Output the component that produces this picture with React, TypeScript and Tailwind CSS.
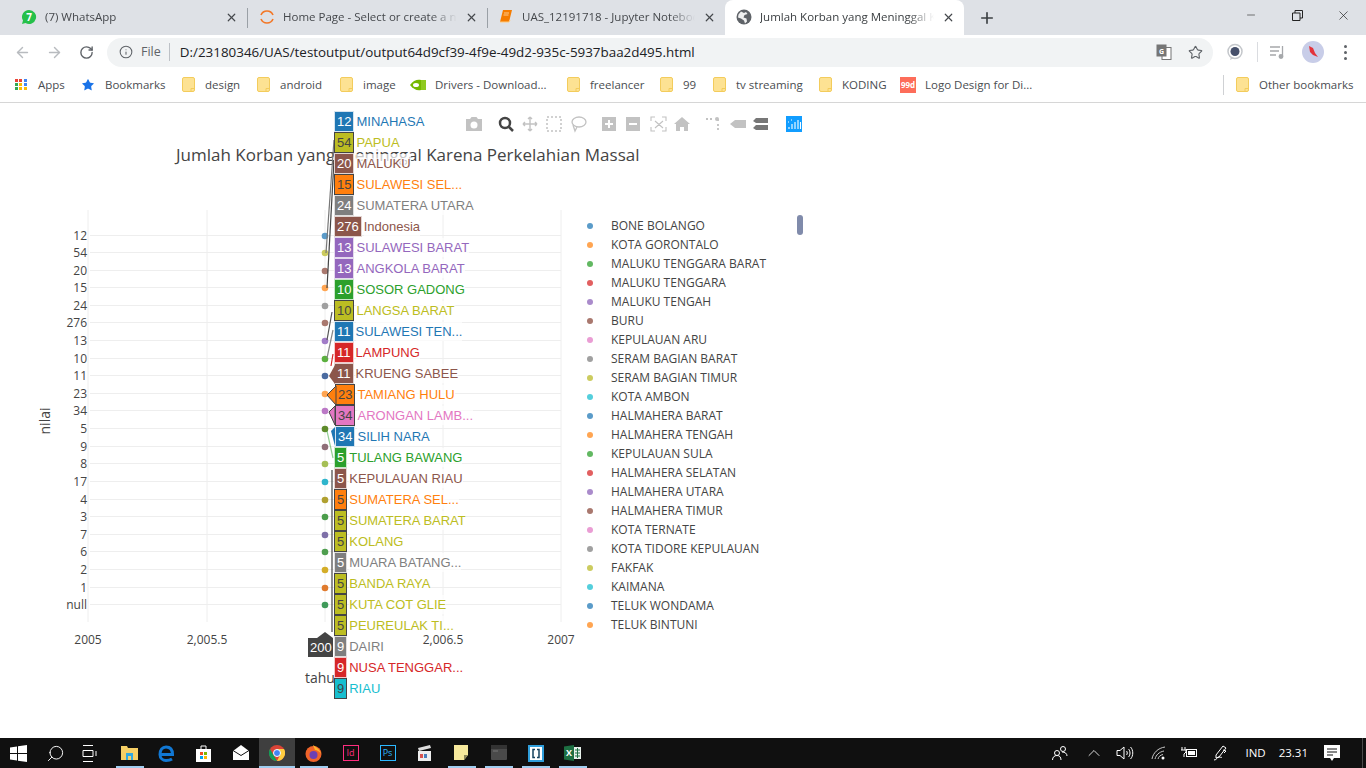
import { ArrowLeft, ArrowRight, ChevronUp, Info, Minus, Plus, RotateCw, Search, Star, X } from "lucide-react";

const ui = "font-['Open_Sans',sans-serif]";

const palette = {
  blue: { box: "bg-[#1f77b4] text-white border-[#d5e4ef]", name: "text-[#1f77b4]" },
  olive: { box: "bg-[#bcbd22] text-[#444] border-[#444]", name: "text-[#bcbd22]" },
  brown: { box: "bg-[#8c564b] text-white border-[#e2d5d2]", name: "text-[#8c564b]" },
  orange: { box: "bg-[#ff7f0e] text-[#444] border-[#444]", name: "text-[#ff7f0e]" },
  gray: { box: "bg-[#7f7f7f] text-white border-[#dfdfdf]", name: "text-[#7f7f7f]" },
  purple: { box: "bg-[#9467bd] text-white border-[#e4d9ee]", name: "text-[#9467bd]" },
  green: { box: "bg-[#2ca02c] text-white border-[#cae7ca]", name: "text-[#2ca02c]" },
  red: { box: "bg-[#d62728] text-white border-[#f5c9c9]", name: "text-[#d62728]" },
  pink: { box: "bg-[#e377c2] text-[#444] border-[#444]", name: "text-[#e377c2]" },
  cyan: { box: "bg-[#17becf] text-[#444] border-[#444]", name: "text-[#17becf]" },
};

const hoverRows: [string, string, keyof typeof palette, string?][] = [
  ["12", "MINAHASA", "blue"],
  ["54", "PAPUA", "olive"],
  ["20", "MALUKU", "brown"],
  ["15", "SULAWESI SEL...", "orange"],
  ["24", "SUMATERA UTARA", "gray"],
  ["276", "Indonesia", "brown"],
  ["13", "SULAWESI BARAT", "purple"],
  ["13", "ANGKOLA BARAT", "purple"],
  ["10", "SOSOR GADONG", "green"],
  ["10", "LANGSA BARAT", "olive"],
  ["11", "SULAWESI TEN...", "blue"],
  ["11", "LAMPUNG", "red"],
  ["11", "KRUENG SABEE", "brown"],
  ["23", "TAMIANG HULU", "orange", "ml-[1px]"],
  ["34", "ARONGAN LAMB...", "pink", "ml-[1px]"],
  ["34", "SILIH NARA", "blue", "ml-[1px]"],
  ["5", "TULANG BAWANG", "green"],
  ["5", "KEPULAUAN RIAU", "brown"],
  ["5", "SUMATERA SEL...", "orange"],
  ["5", "SUMATERA BARAT", "olive"],
  ["5", "KOLANG", "olive"],
  ["5", "MUARA BATANG...", "gray"],
  ["5", "BANDA RAYA", "olive"],
  ["5", "KUTA COT GLIE", "olive"],
  ["5", "PEUREULAK TI...", "olive"],
  ["9", "DAIRI", "gray"],
  ["9", "NUSA TENGGAR...", "red"],
  ["9", "RIAU", "cyan"],
];

const legendColors = ["#5a9bc9", "#ffa552", "#62b862", "#e25f60", "#aa8bcb", "#a9786e", "#ea9dd4", "#a0a0a0", "#cccc5f", "#54cfdc"];
const legend = [
  "BONE BOLANGO", "KOTA GORONTALO", "MALUKU TENGGARA BARAT", "MALUKU TENGGARA", "MALUKU TENGAH", "BURU",
  "KEPULAUAN ARU", "SERAM BAGIAN BARAT", "SERAM BAGIAN TIMUR", "KOTA AMBON", "HALMAHERA BARAT", "HALMAHERA TENGAH",
  "KEPULAUAN SULA", "HALMAHERA SELATAN", "HALMAHERA UTARA", "HALMAHERA TIMUR", "KOTA TERNATE", "KOTA TIDORE KEPULAUAN",
  "FAKFAK", "KAIMANA", "TELUK WONDAMA", "TELUK BINTUNI",
];

const yTicks: [string, number, string][] = [
  ["12", 236, "#5a9bc9"], ["54", 253, "#cccb5f"], ["20", 271, "#a9786e"], ["15", 288, "#ffa552"], ["24", 306, "#a0a0a0"],
  ["276", 323, "#a9786e"], ["13", 341, "#a17cc8"], ["10", 359, "#5bb03f"], ["11", 376, "#4a6ba0"], ["23", 394, "#ffa552"],
  ["34", 411, "#bb79c6"], ["5", 429, "#5d8a2a"], ["9", 447, "#8f6e78"], ["8", 464, "#a5bf55"], ["17", 482, "#2fb5cc"],
  ["4", 500, "#b0a030"], ["3", 517, "#4b9d4b"], ["7", 535, "#7e70a8"], ["6", 552, "#4f9e4f"], ["2", 570, "#d4ad28"],
  ["1", 588, "#e07b2e"], ["null", 605, "#3f9a5a"],
];

const Folder = () => (
  <svg width="13" height="15" viewBox="0 0 13 15" className="shrink-0">
    <rect x="0.5" y="0.5" width="12" height="14" rx="1.5" fill="#fde293" stroke="#f3cc5c" />
    <path d="M9 14.5v-3h3.5" fill="none" stroke="#f3cc5c" />
  </svg>
);

function Tab({ size, icon, title, active }: { size: string; icon: React.ReactNode; title: string; active?: boolean }) {
  return (
    <div className={`${size} h-[35px] pb-[1px] flex items-center gap-[8px] shrink-0 ${active ? "bg-white rounded-t-[8px] text-[#3c4043]" : "text-[#45484c]"}`}>
      <span className="w-4 h-4 flex items-center justify-center shrink-0">{icon}</span>
      <span className="flex-1 text-[11.5px] mask-r-from-85% mask-r-to-100% whitespace-nowrap overflow-hidden">{title}</span>
      <X size={13} strokeWidth={2.2} className="text-[#45484c] shrink-0" />
    </div>
  );
}

function Mark({ width, icon, label }: { width: string; icon: React.ReactNode; label: string }) {
  return (
    <div className={`${width} flex items-center gap-[9px] shrink-0 text-[11.5px] text-[#4a4d51]`}>
      <span className="w-[16px] flex justify-center shrink-0">{icon}</span>
      <span className="whitespace-nowrap">{label}</span>
    </div>
  );
}

function TopBars() {
  return (
    <header className={`${ui} shrink-0`}>
      <div className="h-[35px] bg-[#dee1e6] flex items-end pl-[10px]">
        <Tab
          size="w-[237px] pl-[11px] pr-[9px]"
          title="(7) WhatsApp"
          icon={
            <svg width="16" height="16" viewBox="0 0 16 16">
              <path d="M8 1a7 7 0 0 0-6 10.6L1 15l3.5-1A7 7 0 1 0 8 1z" fill="#25c04a" />
              <text x="8" y="11.5" textAnchor="middle" fontSize="10" fontWeight="700" fill="#fff">7</text>
            </svg>
          }
        />
        <div className="w-px h-[20px] bg-[#9aa0a6] mb-[7px]" />
        <Tab
          size="w-[239px] pl-[11px] pr-[9px]"
          title="Home Page - Select or create a n"
          icon={
            <svg width="16" height="16" viewBox="0 0 16 16" fill="none" stroke="#f37726" strokeWidth="1.6">
              <path d="M2 6a6.5 6.5 0 0 1 12 0" />
              <path d="M2 10a6.5 6.5 0 0 0 12 0" />
            </svg>
          }
        />
        <div className="w-px h-[20px] bg-[#9aa0a6] mb-[7px]" />
        <Tab
          size="w-[237px] pl-[10px] pr-[9px]"
          title="UAS_12191718 - Jupyter Noteboo"
          icon={
            <svg width="16" height="16" viewBox="0 0 16 16">
              <path d="M5 1h9l-3 12H2z" fill="#f57c00" />
              <path d="M2 13h9l1-2" fill="none" stroke="#ffcc80" strokeWidth="1" />
              <path d="M6 4h5M5.5 6h5" stroke="#ffe0b2" strokeWidth="0.8" />
            </svg>
          }
        />
        <Tab
          active
          size="w-[239px] pl-[11px] pr-[9px]"
          title="Jumlah Korban yang Meninggal K"
          icon={
            <svg width="16" height="16" viewBox="0 0 16 16">
              <circle cx="8" cy="8" r="7.5" fill="#5f6368" />
              <path d="M5 2.5l3 1.5 2-1 1.5 2-3 1-1 2.5 3 1 .5 3-2 2-1-3-3-2-3-1 .5-3z" fill="#fff" opacity="0.9" />
            </svg>
          }
        />
        <Plus size={18} strokeWidth={2.2} className="text-[#3c4043] ml-[14px] mb-[8px]" />
        <div className="flex-1" />
        <div className="h-full flex items-start text-[#222]">
          <div className="w-[46px] h-[30px] flex items-center justify-center"><Minus size={12} strokeWidth={1.2} /></div>
          <div className="w-[46px] h-[30px] flex items-center justify-center">
            <svg width="11" height="11" viewBox="0 0 11 11" fill="none" stroke="#222">
              <path d="M.5 3h7.5v7.5H.5zM3 3V.5h7.5V8H8" />
            </svg>
          </div>
          <div className="w-[46px] h-[30px] flex items-center justify-center"><X size={15} strokeWidth={1.1} /></div>
        </div>
      </div>

      <div className="h-[34px] bg-white flex items-center pl-[14px] pr-[12px]">
        <ArrowLeft size={17} strokeWidth={2} className="text-[#b8bbbf]" />
        <ArrowRight size={17} strokeWidth={2} className="text-[#b8bbbf] ml-[15px]" />
        <RotateCw size={15} strokeWidth={2.2} className="text-[#5f6368] ml-[16px]" />
        <div className="ml-[13px] w-[1106px] h-[29px] rounded-full bg-[#f1f3f4] flex items-center pl-[12px] pr-[10px]">
          <Info size={14} strokeWidth={1.8} className="text-[#5f6368]" />
          <span className="ml-[8px] text-[12.5px] text-[#5f6368]">File</span>
          <span className="ml-[8px] w-px h-[18px] bg-[#bdc1c6]" />
          <span className="ml-[10px] text-[13.4px] text-[#202124] whitespace-nowrap">D:/23180346/UAS/testoutput/output64d9cf39-4f9e-49d2-935c-5937baa2d495.html</span>
          <div className="flex-1" />
          <svg width="16" height="16" viewBox="0 0 16 16">
            <rect x="6" y="3.5" width="9" height="12" fill="#fff" stroke="#757575" />
            <rect x="0.5" y="0.5" width="10" height="12" fill="#757575" />
            <text x="5.5" y="9.5" textAnchor="middle" fontSize="7" fontWeight="700" fill="#fff">G</text>
          </svg>
          <Star size={15} strokeWidth={1.8} className="text-[#5f6368] ml-[16px]" />
        </div>
        <svg width="18" height="18" viewBox="0 0 18 18" className="ml-[13px]">
          <circle cx="9" cy="8.5" r="7" fill="#fff" stroke="#c4c7cb" strokeWidth="1.5" />
          <circle cx="9" cy="8.5" r="4.5" fill="#46506b" />
          <path d="M5 14l-1 3 4-2z" fill="#c4c7cb" />
        </svg>
        <span className="ml-[13px] w-px h-[20px] bg-[#dadce0]" />
        <svg width="16" height="16" viewBox="0 0 16 16" className="ml-[12px]" fill="none" stroke="#a6a8ab" strokeWidth="1.3">
          <path d="M0 3h10M0 7h9M0 11h6M12.5 2v10" />
          <circle cx="11" cy="12.5" r="1.8" fill="#a6a8ab" />
        </svg>
        <div className="ml-[16px] w-[22px] h-[22px] rounded-full bg-[#c8cde8] flex items-center justify-center">
          <svg width="14" height="14" viewBox="0 0 14 14"><path d="M3 1l4 2 2 5 3 4-5-2-3-3z" fill="#e3333b" /></svg>
        </div>
        <div className="ml-[20px] flex flex-col gap-[3px]">
          <span className="w-[3px] h-[3px] rounded-full bg-[#5f6368]" />
          <span className="w-[3px] h-[3px] rounded-full bg-[#5f6368]" />
          <span className="w-[3px] h-[3px] rounded-full bg-[#5f6368]" />
        </div>
      </div>

      <div className="h-[34px] bg-white border-b border-[#d6d6d6] flex items-center pl-[13px] pb-[2px]">
        <Mark
          width="w-[67px]"
          label="Apps"
          icon={
            <span className="grid grid-cols-3 gap-[1px] w-[13px]">
              <i className="w-[3px] h-[3px] bg-[#ea4335]" /><i className="w-[3px] h-[3px] bg-[#ea4335]" /><i className="w-[3px] h-[3px] bg-[#4285f4]" />
              <i className="w-[3px] h-[3px] bg-[#34a853]" /><i className="w-[3px] h-[3px] bg-[#fbbc05]" /><i className="w-[3px] h-[3px] bg-[#4285f4]" />
              <i className="w-[3px] h-[3px] bg-[#34a853]" /><i className="w-[3px] h-[3px] bg-[#fbbc05]" /><i className="w-[3px] h-[3px] bg-[#fbbc05]" />
            </span>
          }
        />
        <Mark width="w-[100px]" label="Bookmarks" icon={<Star size={14} fill="#1a73e8" strokeWidth={0} />} />
        <Mark width="w-[75px]" label="design" icon={<Folder />} />
        <Mark width="w-[83px]" label="android" icon={<Folder />} />
        <Mark width="w-[72px]" label="image" icon={<Folder />} />
        <Mark
          width="w-[155px]"
          label="Drivers - Download..."
          icon={
            <svg width="16" height="12" viewBox="0 0 16 12">
              <path d="M0 6C3 1 8 0 11 1v10C7 12 3 10 0 6z" fill="#76b900" />
              <ellipse cx="6" cy="6" rx="3" ry="2" fill="#fff" />
              <path d="M11 1h5v10h-5z" fill="#8fca1f" />
            </svg>
          }
        />
        <Mark width="w-[93px]" label="freelancer" icon={<Folder />} />
        <Mark width="w-[53px]" label="99" icon={<Folder />} />
        <Mark width="w-[106px]" label="tv streaming" icon={<Folder />} />
        <Mark width="w-[83px]" label="KODING" icon={<Folder />} />
        <Mark
          width="w-[323px]"
          label="Logo Design for Di..."
          icon={<span className="w-[16px] h-[16px] bg-[#fd6d5a] text-white text-[8px] font-bold leading-[16px] text-center">99d</span>}
        />
        <span className="w-px h-[20px] bg-[#cfd1d4]" />
        <Mark width="w-[130px] ml-[10px]" label="Other bookmarks" icon={<Folder />} />
      </div>
    </header>
  );
}

function Chart() {
  return (
    <svg viewBox="0 103 1366 635" className="absolute inset-0 w-full h-full font-['Open_Sans',sans-serif]">
      {[88, 207, 325, 443, 561].map((x) => (
        <line key={x} x1={x} x2={x} y1="210" y2="622" stroke="#eee" />
      ))}
      {yTicks.map(([, y]) => (
        <line key={y} x1="90" x2="561" y1={y - 0.5} y2={y - 0.5} stroke="#eee" />
      ))}
      <text x="176" y="161" fontSize="17" fill="#444">Jumlah Korban yang Meninggal Karena Perkelahian Massal</text>
      {yTicks.map(([label, y]) => (
        <text key={label} x="87" y={y + 4} fontSize="12" fill="#444" textAnchor="end">{label}</text>
      ))}
      {yTicks.map(([label, y, color]) => (
        <circle key={label} cx="325" cy={y} r="3.3" fill={color} />
      ))}
      <text x="88" y="644" fontSize="12" fill="#444" textAnchor="middle">2005</text>
      <text x="207" y="644" fontSize="12" fill="#444" textAnchor="middle">2,005.5</text>
      <text x="443" y="644" fontSize="12" fill="#444" textAnchor="middle">2,006.5</text>
      <text x="561" y="644" fontSize="12" fill="#444" textAnchor="middle">2007</text>
      <text x="305" y="683" fontSize="14" fill="#444">tahun</text>
      <text x="0" y="0" fontSize="14" fill="#444" textAnchor="middle" transform="translate(50 421) rotate(-90)">nilai</text>

      <g fill="none" strokeWidth="1.2">
        <path d="M327 288L334 160" stroke="#444" />
        <path d="M326 253L334 140" stroke="#777" />
        <path d="M327 340L332 312" stroke="#555" />
        <path d="M327 358L333 330" stroke="#888" />
        <path d="M331 366L333 354" stroke="#d62728" />
        <path d="M327 431L333 458" stroke="#2ca02c" opacity="0.5" />
        <path d="M332 470L332 632" stroke="#444" />
      </g>
      <path d="M317 638L325 632L333 638V657H308V638z" fill="#444" />
      <text x="310" y="652" fontSize="13" fill="#fff" className="font-['Liberation_Sans',sans-serif]">200</text>
    </svg>
  );
}

function HoverLabels() {
  return (
    <div className="absolute left-[334px] top-[8px] flex flex-col font-['Liberation_Sans',sans-serif] text-[13px]">
      {hoverRows.map(([value, name, color, offset]) => (
        <div key={name} className={`h-[21px] flex items-center gap-[2px] ${offset ?? ""}`}>
          <span className={`h-[21px] px-[2px] border flex items-center ${palette[color].box}`}>{value}</span>
          <span className={`whitespace-nowrap bg-white/70 ${palette[color].name} [text-shadow:1px_1px_1px_#fff,-1px_-1px_1px_#fff,1px_-1px_1px_#fff,-1px_1px_1px_#fff]`}>{name}</span>
        </div>
      ))}
    </div>
  );
}

function HoverArrows() {
  return (
    <svg viewBox="0 103 1366 635" className="absolute inset-0 w-full h-full pointer-events-none">
      <path d="M335 365L329 376L335 384z" fill="#8c564b" />
      <path d="M336 386L327 395L336 405z" fill="#ff7f0e" stroke="#444" />
      <path d="M335 406L329 412L335 425z" fill="#e377c2" stroke="#444" />
      <path d="M335 427L331 431L335 446z" fill="#1f77b4" />
    </svg>
  );
}

function ModeBar() {
  const off = "#c2c2c2";
  return (
    <div className="absolute left-[465px] top-[12px] flex items-center">
      <svg width="340" height="18" viewBox="0 0 340 18">
        <path d="M1 4h4l1.500-2h5l1.500 2h4v12H1z" fill={off} />
        <circle cx="9" cy="10" r="3.500" fill="#fff" />
        <circle cx="40" cy="8" r="5" fill="none" stroke="#444" strokeWidth="2.500" />
        <path d="M44 12l4 4" stroke="#444" strokeWidth="2.500" />
        <path d="M65 2v14M58 9h14M65 2l-2 2M65 2l2 2M65 16l-2-2M65 16l2-2M58 9l2-2M58 9l2 2M72 9l-2-2M72 9l-2 2" stroke={off} strokeWidth="1.400" fill="none" />
        <rect x="82" y="2" width="14" height="14" fill="none" stroke={off} strokeWidth="1.500" strokeDasharray="2 2" />
        <ellipse cx="114" cy="7" rx="7" ry="5" fill="none" stroke={off} strokeWidth="1.300" />
        <path d="M108 10l2 6 2-4" fill="none" stroke={off} strokeWidth="1.300" />
        <rect x="137" y="2" width="14" height="14" fill={off} />
        <path d="M144 5v8M140 9h8" stroke="#fff" strokeWidth="2" />
        <rect x="161" y="2" width="14" height="14" fill={off} />
        <path d="M164 9h8" stroke="#fff" strokeWidth="2" />
        <path d="M186 6V2h4M197 2h4v4M201 12v4h-4M190 16h-4v-4M190 6l8 7M198 6l-8 7" fill="none" stroke={off} strokeWidth="1.100" />
        <path d="M217 2l8 7h-2v7h-4v-4h-4v4h-4V9h-2z" fill={off} />
        <path d="M241 4h2M245 4h2M253 4v2M253 9v2M253 13v2" stroke={off} strokeWidth="1.800" />
        <circle cx="252" cy="4" r="2" fill={off} />
        <path d="M265 9l5-4h11v8h-11z" fill={off} />
        <path d="M288 6l3-3h12v5h-12zM288 13l3-3h12v5h-12z" fill="#777" />
        <rect x="321" y="1" width="16" height="16" fill="#119dff" />
        <path d="M324 12v2M327 9v5M330 7v7M333 5v9M335.500 7v7" stroke="#fff" strokeWidth="1.100" />
        <path d="M323 7h1M326 5h1" stroke="#fff" />
      </svg>
    </div>
  );
}

function Legend() {
  return (
    <div className="absolute left-[587px] top-[113px] flex flex-col font-['Open_Sans',sans-serif] text-[12px] text-[#444]">
      {legend.map((name, i) => (
        <div key={name} className="h-[19px] flex items-center gap-[18px] whitespace-nowrap">
          <span className="w-[6px] h-[6px] rounded-full" style={{ backgroundColor: legendColors[i % 10] }} />
          {name}
        </div>
      ))}
    </div>
  );
}

function Taskbar() {
  const underline = "w-[28px] h-[2px] bg-[#9fcdf0]";
  const cell = "w-[37px] h-[30px] flex flex-col items-center justify-between shrink-0 pt-[7px]";
  return (
    <footer className={`${ui} h-[30px] bg-[#101010] flex items-center shrink-0`}>
      <div className="w-[37px] flex justify-center">
        <svg width="17" height="17" viewBox="0 0 17 17" fill="#fff">
          <path d="M0 2.500l7-1v6.500H0zM8 1.300L17 0v8H8zM0 9h7v6.500l-7-1zM8 9h9v8l-9-1.300z" />
        </svg>
      </div>
      <div className="w-[36px] flex justify-center"><Search size={19} strokeWidth={1.2} className="text-white -scale-x-100" /></div>
      <div className="w-[33px] flex justify-center">
        <svg width="16" height="17" viewBox="0 0 16 17" fill="none" stroke="#fff">
          <path d="M1 .5h10M1 16.500h10M1 5.500h10v6H1zM14 6v5" />
        </svg>
      </div>
      <div className="w-[5px]" />
      <div className={cell}>
        <svg width="17" height="16" viewBox="0 0 17 16">
          <path d="M0 1h6l1 2h10v12H0z" fill="#f6cf65" />
          <path d="M5 15V8h7v7h-2v-4H7v4z" fill="#31a8e0" />
        </svg>
        <span className={underline} />
      </div>
      <div className={cell}>
        <svg width="17" height="17" viewBox="0 0 17 17" fill="none">
          <path d="M2 9.500h12.500C14.500 4 11.500 2 8 2 4.500 2 2 5 2 9.500c0 4 3 6 6 6 2.500 0 4.500-.5 6-1.500" stroke="#1178d4" strokeWidth="3" />
        </svg>
        <span className="h-[2px]" />
      </div>
      <div className={cell}>
        <svg width="15" height="17" viewBox="0 0 15 17">
          <path d="M0 4h15v13H0z" fill="#fff" />
          <path d="M5 4V1h5v3" fill="none" stroke="#fff" />
          <rect x="4" y="7" width="3" height="3" fill="#f25022" />
          <rect x="8" y="7" width="3" height="3" fill="#7fba00" />
          <rect x="4" y="11" width="3" height="3" fill="#00a4ef" />
          <rect x="8" y="11" width="3" height="3" fill="#ffb900" />
        </svg>
        <span className="h-[2px]" />
      </div>
      <div className={cell}>
        <svg width="16" height="15" viewBox="0 0 16 15">
          <path d="M0 6l8-6 8 6v9H0z" fill="#fff" />
          <path d="M0 5.500l8 5 8-5" fill="none" stroke="#101010" />
        </svg>
        <span className="h-[2px]" />
      </div>
      <div className="w-[36px] h-[30px] bg-[#3f3f3f] flex flex-col items-center justify-between pt-[7px] shrink-0">
        <svg width="16" height="16" viewBox="0 0 16 16">
          <circle cx="8" cy="8" r="8" fill="#db4437" />
          <path d="M8 16a8 8 0 0 1-7-12l4 7z" fill="#0f9d58" />
          <path d="M8 4h7a8 8 0 0 1-7 12l3-6z" fill="#ffcd40" />
          <circle cx="8" cy="8" r="3.500" fill="#4285f4" stroke="#fff" />
        </svg>
        <span className="w-full h-[2px] bg-[#9fcdf0]" />
      </div>
      <div className={cell}>
        <svg width="17" height="17" viewBox="0 0 17 17">
          <circle cx="8.500" cy="9" r="8" fill="#f0642a" />
          <path d="M8 0c3 2 7 4 8 9-2-3-4-4-6-4z" fill="#ffb32c" />
          <circle cx="8.500" cy="10" r="4" fill="#6c3fb5" />
        </svg>
        <span className={underline} />
      </div>
      <div className={cell}>
        <span className="w-[16px] h-[16px] border border-[#ff2d7f] text-[#ff2d7f] text-[9px] leading-[14px] text-center">Id</span>
        <span className="h-[2px]" />
      </div>
      <div className={cell}>
        <span className="w-[16px] h-[16px] border border-[#2bb8ff] text-[#2bb8ff] text-[9px] leading-[14px] text-center">Ps</span>
        <span className="h-[2px]" />
      </div>
      <div className={cell}>
        <svg width="15" height="16" viewBox="0 0 15 16">
          <path d="M1 3l12-3 1 3-12 3z" fill="#ddd" />
          <rect x="1" y="6" width="13" height="10" fill="#eee" />
          <rect x="3" y="9" width="3" height="4" fill="#d9534f" />
          <rect x="7" y="9" width="3" height="4" fill="#4a7ebb" />
        </svg>
        <span className="h-[2px]" />
      </div>
      <div className={cell}>
        <svg width="15" height="15" viewBox="0 0 15 15">
          <path d="M0 0h14v10l-4 5H0z" fill="#f6e99c" />
          <path d="M10 15v-5h4z" fill="#8a8558" />
        </svg>
        <span className={underline} />
      </div>
      <div className={cell}>
        <svg width="16" height="15" viewBox="0 0 16 15">
          <rect width="16" height="15" rx="1" fill="#4a4a4a" />
          <rect width="16" height="4" fill="#333" />
          <path d="M2 6h5" stroke="#777" />
        </svg>
        <span className={underline} />
      </div>
      <div className={cell}>
        <svg width="16" height="17" viewBox="0 0 16 17">
          <rect width="16" height="17" fill="#2f9edb" />
          <rect x="2" y="2" width="12" height="13" fill="#fff" />
          <path d="M7 4.500H5v8h2M9 4.500h2v8H9" fill="none" stroke="#15425e" strokeWidth="1.500" />
        </svg>
        <span className={underline} />
      </div>
      <div className={cell}>
        <svg width="17" height="16" viewBox="0 0 17 16">
          <path d="M0 1.500L10 0v16L0 14.500z" fill="#1d6f42" />
          <path d="M10 2h7v12h-7z" fill="#e8f2ec" />
          <path d="M11 5h5M11 8h5M11 11h5M13.500 3v10" stroke="#1d6f42" />
          <text x="5" y="11" textAnchor="middle" fontSize="9" fontWeight="700" fill="#fff">X</text>
        </svg>
        <span className={underline} />
      </div>

      <div className="flex-1" />
      <div className="flex items-center text-white">
        <svg width="16" height="16" viewBox="0 0 16 16" fill="none" stroke="#fff" className="mr-[16px]">
          <circle cx="5" cy="8" r="2.500" />
          <circle cx="11" cy="4" r="2.500" />
          <path d="M.5 15c0-3 2-4.500 4.500-4.500S9 12 9 15M10 7c3 0 5 1.500 5 4" />
        </svg>
        <ChevronUp size={20} strokeWidth={1} className="mr-[12px]" />
        <svg width="18" height="16" viewBox="0 0 18 16" fill="none" stroke="#fff" className="mr-[17px]">
          <path d="M1 5.500h3L8 2v12L4 10.500H1zM10.500 6c1 1 1 3 0 4M12.500 4c2 2 2 6 0 8M14.500 2c3 3 3 9 0 12" />
        </svg>
        <svg width="16" height="14" viewBox="0 0 16 14" fill="none" stroke="#c8c8c8" className="mr-[13px]">
          <path d="M1 13C2 7 7 2 14 1M4 13c1-4 4-7 9-8M7 13c.500-2 2-4 5-4.500" />
          <circle cx="12" cy="12" r="1.500" fill="#fff" stroke="none" />
        </svg>
        <svg width="18" height="14" viewBox="0 0 18 14" fill="none" stroke="#fff" className="mr-[14px]">
          <path d="M2 1v3M5 1v3M1 4h5v2l-2 2v3" />
          <rect x="6.500" y="3.500" width="10" height="7" />
          <rect x="8" y="5" width="7" height="4" fill="#fff" stroke="none" />
        </svg>
        <svg width="16" height="16" viewBox="0 0 16 16" fill="none" stroke="#fff" className="mr-[17px]">
          <path d="M11 1l3 2-7 9-3 1 0-3zM2 15c3 0 3-3 5-3s2 1 3 0M11 5l3 1-2 2" />
        </svg>
        <span className="text-[11.5px] mr-[13px]">IND</span>
        <span className="text-[11.5px] mr-[16px]">23.31</span>
        <svg width="16" height="16" viewBox="0 0 16 16" className="mr-[22px]">
          <path d="M0 0h16v13H10l-2 3-2-3H0z" fill="#fff" />
          <path d="M3 4h10M3 7h10M3 10h6" stroke="#101010" />
        </svg>
        <span className="w-px h-[30px] bg-[#4a4a4a] mr-[3px]" />
      </div>
    </footer>
  );
}

export default function App() {
  return (
    <div className="w-[1366px] h-[768px] flex flex-col overflow-hidden bg-white">
      <TopBars />
      <main className="relative flex-1 bg-white">
        <Chart />
        <ModeBar />
        <Legend />
        <span className="absolute left-[797px] top-[112px] w-[6px] h-[20px] rounded-full bg-[#808bab]" />
        <HoverLabels />
        <HoverArrows />
      </main>
      <Taskbar />
    </div>
  );
}
